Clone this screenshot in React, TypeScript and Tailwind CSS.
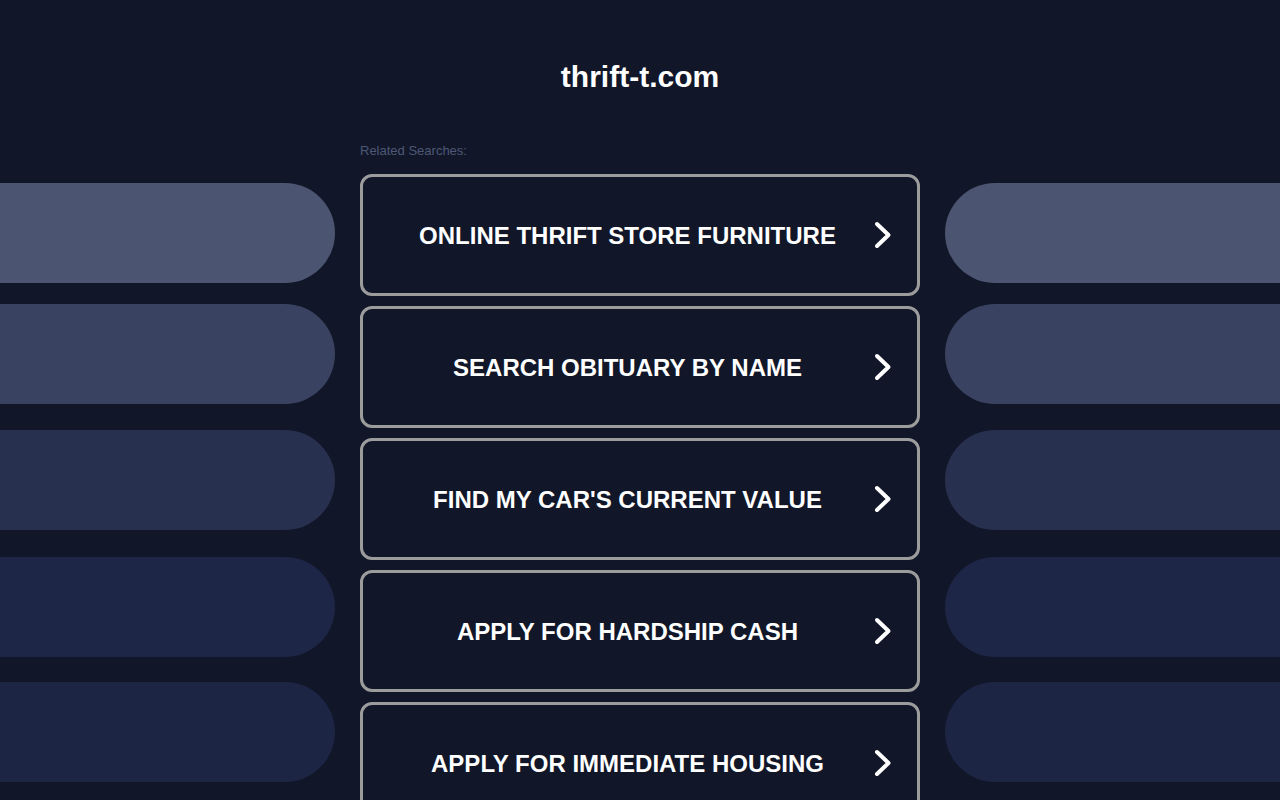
const searches = [
  'ONLINE THRIFT STORE FURNITURE',
  'SEARCH OBITUARY BY NAME',
  "FIND MY CAR'S CURRENT VALUE",
  'APPLY FOR HARDSHIP CASH',
  'APPLY FOR IMMEDIATE HOUSING',
];

// side decoration bars, brightest at the top
const sideBars = [
  'mt-[9px] bg-[#4b5571]',
  'mt-[21px] bg-[#3a4261]',
  'mt-[26px] bg-[#283050]',
  'mt-[27px] bg-[#1d2646]',
  'mt-[25px] bg-[#1c2544]',
];

function Chevron() {
  return (
    <svg width="18" height="28" viewBox="0 0 18 28" fill="none">
      <polyline
        points="3,3 14.5,14 3,25"
        stroke="white"
        strokeWidth="4"
        strokeLinecap="round"
        strokeLinejoin="round"
      />
    </svg>
  );
}

function SearchCard({ label }: { label: string }) {
  return (
    <a
      href="#"
      className="relative flex h-[122px] items-center rounded-[12px] border-[3px] border-[#9c9c9c] bg-[#111729]"
    >
      <span className="block flex-1 pr-[25px] pt-[2px] text-center text-[24px] font-bold text-white">
        {label}
      </span>
      <span className="absolute right-[25px] top-1/2 -translate-y-1/2">
        <Chevron />
      </span>
    </a>
  );
}

export default function App() {
  return (
    <div
      className="h-[800px] overflow-hidden bg-[#111729]"
      style={{ fontFamily: '"Liberation Sans", Arial, sans-serif' }}
    >
      <header className="pt-[59px] text-center">
        <h1 className="text-[30px] font-bold leading-[36px] text-white">thrift-t.com</h1>
      </header>

      <div className="mt-[48px] grid grid-cols-[335px_560px_335px] gap-x-[25px]">
        <div />
        <p className="text-[13px] leading-[16px] text-[#4e5876]">Related Searches:</p>
        <div />

        <div className="mt-[15px] flex flex-col">
          {sideBars.map((c, i) => (
            <div key={i} className={`h-[100px] rounded-r-full ${c}`} />
          ))}
        </div>

        <div className="mt-[15px] flex flex-col gap-[10px]">
          {searches.map((s) => (
            <SearchCard key={s} label={s} />
          ))}
        </div>

        <div className="mt-[15px] flex flex-col">
          {sideBars.map((c, i) => (
            <div key={i} className={`h-[100px] rounded-l-full ${c}`} />
          ))}
        </div>
      </div>
    </div>
  );
}
